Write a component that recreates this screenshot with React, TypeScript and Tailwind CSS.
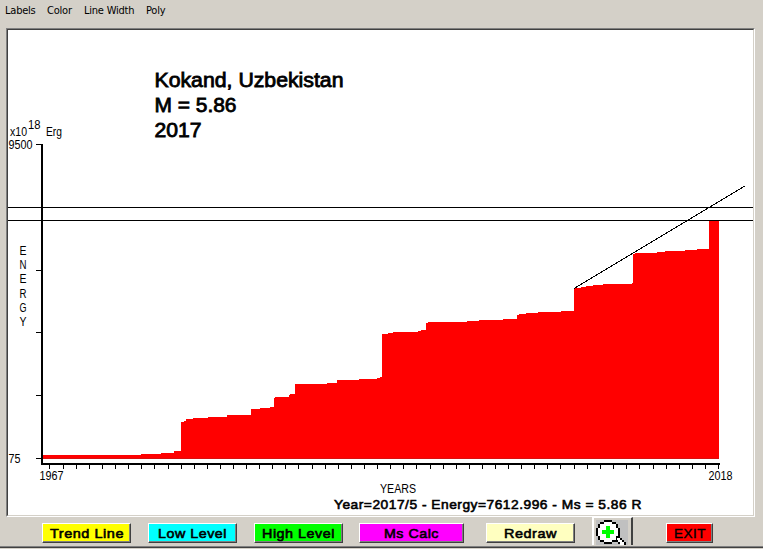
import type { ReactNode } from "react";
import clsx from "clsx";

const menuItems = [
  { label: "Labels", className: "w-[42px]" },
  { label: "Color", className: "w-[37px]" },
  { label: "Line Width", className: "w-[62px]" },
  { label: "Poly", className: "w-[30px]" },
];

// [x, top] of every step of the cumulative energy curve
const steps = [
  [43, 455], [141, 454], [161, 453], [174, 451], [181, 422], [184, 421],
  [186, 419], [193, 418], [208, 417], [227, 415], [251, 409], [260, 408],
  [270, 407], [274, 398], [275, 397], [289, 395], [290, 394], [295, 384],
  [327, 383], [337, 380], [359, 379], [377, 378], [380, 377], [382, 334],
  [388, 333], [393, 332], [418, 331], [421, 330], [426, 323], [428, 322],
  [467, 321], [479, 320], [503, 319], [517, 315], [519, 314], [526, 313],
  [538, 312], [561, 311], [574, 288], [581, 287], [586, 286], [593, 285],
  [603, 284], [632, 283], [633, 254], [635, 253], [657, 252], [665, 251],
  [685, 250], [697, 249], [709, 220],
];

const area =
  "M43 459" + steps.map(([x, y]) => `H${x}V${y}`).join("") + "H719V459Z";

const yearTicks = [
  49, 63, 76, 89, 102, 115, 128, 141, 154, 168, 181, 194, 207, 220, 233, 246,
  259, 272, 285, 298, 312, 325, 338, 351, 364, 377, 390, 403, 416, 430, 443,
  456, 469, 482, 495, 508, 521, 534, 547, 560, 574, 587, 600, 613, 626, 639,
  653, 666, 679, 692, 705, 718,
];

const energyTicks = [144, 270, 332, 395, 458];

export default function App() {
  return (
    <div className="flex h-[549px] w-[763px] flex-col overflow-hidden bg-[#d4d0c8] font-['Liberation_Sans',sans-serif] text-black">
      <div className="flex h-7 pt-[3px] pl-[5px] font-['DejaVu_Sans_Condensed','DejaVu_Sans',sans-serif] text-[11px] leading-[15px] font-stretch-condensed tracking-[-0.22px]">
        {menuItems.map((item) => (
          <div
            key={item.label}
            className={clsx("whitespace-nowrap", item.className)}
          >
            {item.label}
          </div>
        ))}
      </div>

      <div className="ml-1.5 h-[489px] w-[749px] shrink-0 border border-t-[#808080] border-r-white border-b-white border-l-[#808080]">
        <div className="h-full border border-t-[#404040] border-r-[#d4d0c8] border-b-[#d4d0c8] border-l-[#404040] bg-white">
          <Chart />
        </div>
      </div>

      <div className="flex h-[30px] shrink-0 items-start border-b border-[#808080] pl-[42px]">
        <ToolButton className="mr-[17px] w-[89px] bg-[#ffff00]" label="Trend Line" width={74} />
        <ToolButton className="mr-[17px] w-[89px] bg-[#00ffff]" label="Low Level" width={69} />
        <ToolButton className="mr-4 w-[89px] bg-[#00ff00]" label="High Level" width={73} />
        <ToolButton className="mr-[22px] w-[105px] bg-[#ff00ff]" label="Ms Calc" width={55} />
        <ToolButton className="mr-[17px] w-[89px] bg-[#ffffc0]" label="Redraw" width={53} />
        <button className="mr-[33px] flex h-7 w-[41px] border-t border-r-2 border-l-2 border-t-white border-r-[#404040] border-l-white pt-0.5 pl-0.5">
          <ZoomIcon />
        </button>
        <ToolButton className="w-[47px] bg-[#ff0000]" label="EXIT" width={32} light />
      </div>
      <div className="h-px shrink-0 bg-[#404040]" />
    </div>
  );
}

function ToolButton({
  className,
  label,
  width,
  light,
}: {
  className: string;
  label: string;
  width: number;
  light?: boolean;
}) {
  return (
    <button
      className={clsx(
        "mt-1.5 flex h-5 items-center justify-center border border-t-white border-r-[#404040] border-b-[#404040] border-l-white shadow-[inset_-1px_-1px_0_#808080]",
        className,
      )}
    >
      <svg width={width} height="16" className="block overflow-visible">
        <text
          x="0"
          y="13"
          textLength={width}
          lengthAdjust="spacingAndGlyphs"
          className={clsx(
            "stroke-black text-[13.5px] tracking-[0.5px]",
            light ? "stroke-[0.4px]" : "stroke-[0.6px]",
          )}
        >
          {label}
        </text>
      </svg>
    </button>
  );
}

function Label({
  x,
  y,
  width,
  className = "text-[12px]",
  children,
}: {
  x: number;
  y: number;
  width: number;
  className?: string;
  children: ReactNode;
}) {
  return (
    <text
      x={x}
      y={y}
      textLength={width}
      lengthAdjust="spacingAndGlyphs"
      className={className}
    >
      {children}
    </text>
  );
}

const titleClass = "stroke-black stroke-[0.8px] text-[20px]";

function Chart() {
  return (
    <svg viewBox="8 30 745 485" width="745" height="485" className="block">
      <g shapeRendering="crispEdges">
        <path d={area} fill="#ff0000" />
        <rect x="43" y="458" width="676" height="1" fill="#d81010" />
        <rect x="41" y="144" width="2" height="321" />
        <rect x="41" y="463" width="679" height="2" />
        {energyTicks.map((y) => (
          <rect key={y} x="36" y={y} width="5" height="1" />
        ))}
        {yearTicks.map((x) => (
          <rect key={x} x={x} y="465" width="1" height="4" />
        ))}
        <rect x="8" y="207" width="745" height="1" />
        <rect x="8" y="220" width="745" height="1" />
        <path d="M574 288.5L745 186" stroke="#000" fill="none" />
      </g>

      <Label x={154.5} y={87} width={189} className={titleClass}>Kokand, Uzbekistan</Label>
      <Label x={154.5} y={112} width={82} className={titleClass}>M = 5.86</Label>
      <Label x={154.5} y={137} width={47} className={titleClass}>2017</Label>

      <Label x={10} y={136} width={17}>x10</Label>
      <Label x={28} y={129} width={12.5}>18</Label>
      <Label x={46} y={136} width={16}>Erg</Label>
      <Label x={8.5} y={149} width={24}>9500</Label>
      <Label x={8.5} y={463} width={12}>75</Label>
      <Label x={39.5} y={480} width={24}>1967</Label>
      <Label x={708.5} y={480} width={24}>2018</Label>
      <Label x={380} y={493} width={36}>YEARS</Label>
      {"ENERGY".split("").map((char, i) => (
        <Label key={i} x={19.5} y={255 + i * 14.2} width={7}>
          {char}
        </Label>
      ))}
      <Label x={334} y={509} width={308} className="stroke-black stroke-[0.6px] text-[13.5px] tracking-[0.5px]">
        Year=2017/5 - Energy=7612.996 - Ms = 5.86 R
      </Label>
    </svg>
  );
}

function ZoomIcon() {
  return (
    <svg
      viewBox="596 520 32 25"
      width="32"
      height="25"
      shapeRendering="crispEdges"
      className="block bg-[#c0c0c0]"
    >
      <path d="M604 520h8v2h4v2h2v4h2v8h-2v4h-2v2h-4v2h-8v-2h-4v-2h-2v-4h-2v-8h2v-4h2v-2h4z" />
      <path d="M604 522h8v2h4v4h2v8h-2v4h-4v2h-8v-2h-4v-4h-2v-8h2v-4h4z" fill="#fff" />
      <path d="M616 536h4v2h2v2h2v2h2v3h-6v-1h-2v-2h-2z" />
      <path d="M617 538h3v2h2v2h2v3h-4v-3h-2v-2h-1z" fill="#fff" />
      <path d="M606 526h4v4h4v4h-4v4h-4v-4h-4v-4h4z" fill="#00ff00" />
    </svg>
  );
}
